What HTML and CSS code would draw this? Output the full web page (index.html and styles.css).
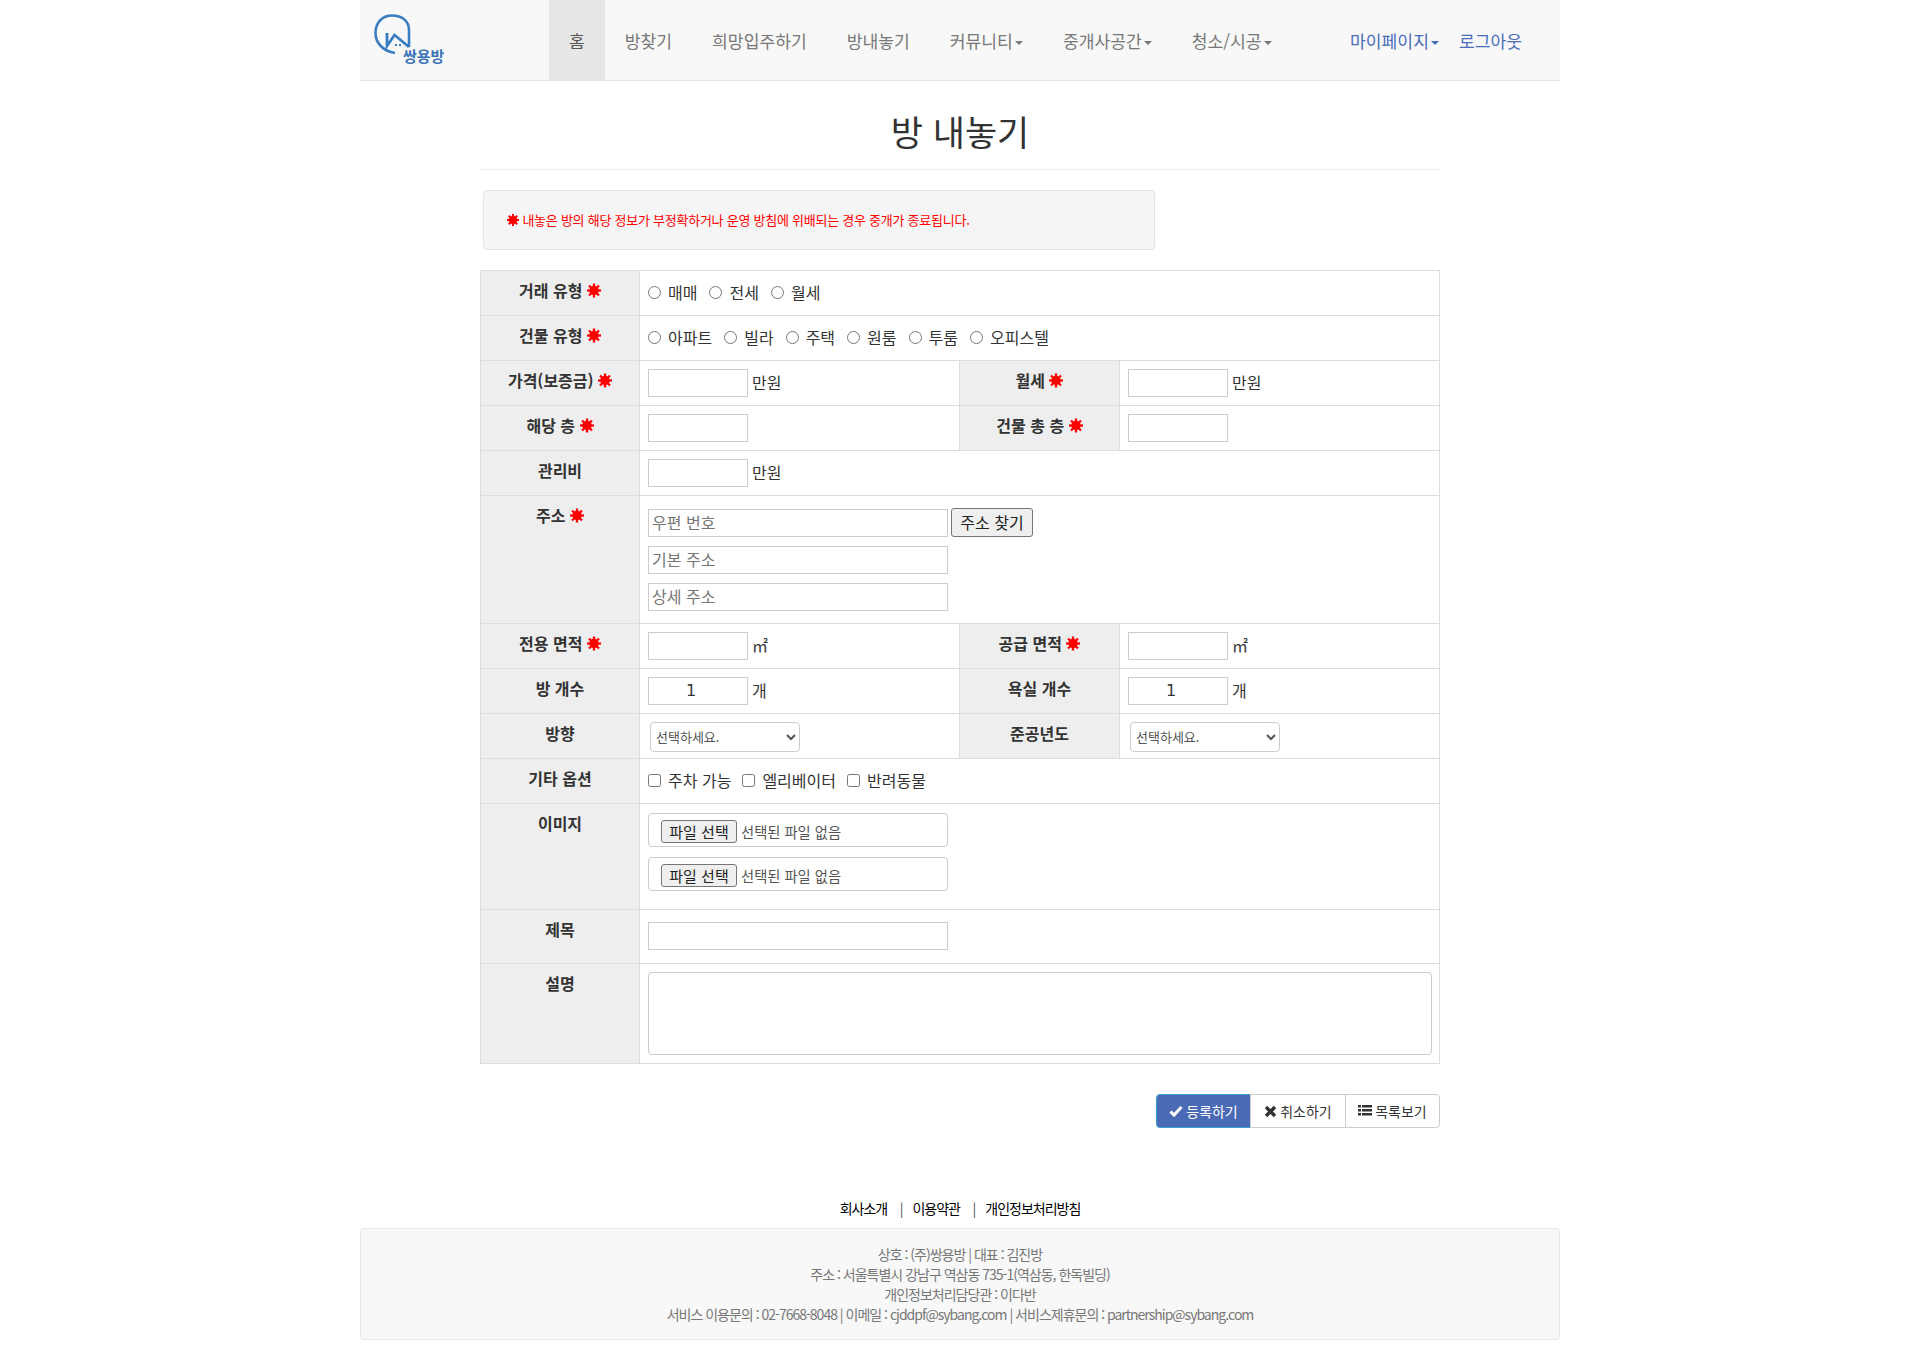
FILE: index.html
```html
<!DOCTYPE html>
<html lang="ko">
<head>
<meta charset="utf-8">
<title>방 내놓기</title>
<link rel="stylesheet" href="styles.css">
</head>
<body>
<svg class="defs" aria-hidden="true">
  <symbol id="star" viewBox="0 0 16 16">
    <circle cx="8" cy="8" r="5.400" fill="#f00"/>
    <g stroke="#f00" stroke-width="2.600">
      <line x1="8" y1="0" x2="8" y2="16"/>
      <line x1="0" y1="8" x2="16" y2="8"/>
      <line x1="2.300" y1="2.300" x2="13.700" y2="13.700"/>
      <line x1="13.700" y1="2.300" x2="2.300" y2="13.700"/>
    </g>
  </symbol>
</svg>
<div class="page">
  <nav class="navbar">
    <a class="brand" href="#">
      <svg class="logo" width="100" height="70" viewBox="0 0 100 70">
        <path d="M49 37V20C49 11 42 5.500 32 5.500C22 5.500 15.500 13 15.500 23C15.500 33 23 41 35 43" fill="none" stroke="#3a7dc0" stroke-width="2.600"/>
        <path d="M27 23V36L34.500 25L49 37" fill="none" stroke="#3a7dc0" stroke-width="2.800"/>
        <rect x="35" y="34" width="2" height="2" fill="#3a7dc0"/>
        <rect x="39" y="34" width="2" height="2" fill="#3a7dc0"/>
        <text x="43" y="52" class="logo-text">쌍용방</text>
      </svg>
    </a>
    <ul class="nav">
      <li class="nav-item active">홈</li>
      <li class="nav-item">방찾기</li>
      <li class="nav-item">희망입주하기</li>
      <li class="nav-item">방내놓기</li>
      <li class="nav-item">커뮤니티<i class="caret"></i></li>
      <li class="nav-item">중개사공간<i class="caret"></i></li>
      <li class="nav-item">청소/시공<i class="caret"></i></li>
    </ul>
    <ul class="nav nav-right">
      <li class="nav-item user">마이페이지<i class="caret"></i></li>
      <li class="nav-item user">로그아웃</li>
    </ul>
  </nav>

  <main class="content">
    <h2 class="title">방 내놓기</h2>
    <div class="well"><svg class="star star-sm"><use href="#star"/></svg> 내놓은 방의 해당 정보가 부정확하거나 운영 방침에 위배되는 경우 중개가 종료됩니다.</div>

    <table class="form-table">
      <colgroup><col class="c-label-a"><col class="c-field"><col class="c-label"><col class="c-field"></colgroup>
      <tr>
        <th>거래 유형 <svg class="star"><use href="#star"/></svg></th>
        <td colspan="3"><div class="opts">
          <label class="opt"><input type="radio" name="deal">매매</label>
          <label class="opt"><input type="radio" name="deal">전세</label>
          <label class="opt"><input type="radio" name="deal">월세</label>
        </div></td>
      </tr>
      <tr>
        <th>건물 유형 <svg class="star"><use href="#star"/></svg></th>
        <td colspan="3"><div class="opts">
          <label class="opt"><input type="radio" name="kind">아파트</label>
          <label class="opt"><input type="radio" name="kind">빌라</label>
          <label class="opt"><input type="radio" name="kind">주택</label>
          <label class="opt"><input type="radio" name="kind">원룸</label>
          <label class="opt"><input type="radio" name="kind">투룸</label>
          <label class="opt"><input type="radio" name="kind">오피스텔</label>
        </div></td>
      </tr>
      <tr>
        <th>가격(보증금) <svg class="star"><use href="#star"/></svg></th>
        <td><div class="field"><input class="input short" type="text"><span class="unit">만원</span></div></td>
        <th>월세 <svg class="star"><use href="#star"/></svg></th>
        <td><div class="field"><input class="input short" type="text"><span class="unit">만원</span></div></td>
      </tr>
      <tr>
        <th>해당 층 <svg class="star"><use href="#star"/></svg></th>
        <td><div class="field"><input class="input short" type="text"></div></td>
        <th>건물 총 층 <svg class="star"><use href="#star"/></svg></th>
        <td><div class="field"><input class="input short" type="text"></div></td>
      </tr>
      <tr>
        <th>관리비</th>
        <td colspan="3"><div class="field"><input class="input short" type="text"><span class="unit">만원</span></div></td>
      </tr>
      <tr>
        <th>주소 <svg class="star"><use href="#star"/></svg></th>
        <td colspan="3"><div class="addr">
          <div class="addr-row"><input class="input long" type="text" placeholder="우편 번호"><button class="find" type="button">주소 찾기</button></div>
          <div class="addr-row"><input class="input long" type="text" placeholder="기본 주소"></div>
          <div class="addr-row"><input class="input long" type="text" placeholder="상세 주소"></div>
        </div></td>
      </tr>
      <tr>
        <th>전용 면적 <svg class="star"><use href="#star"/></svg></th>
        <td><div class="field"><input class="input short" type="text"><span class="unit">㎡</span></div></td>
        <th>공급 면적 <svg class="star"><use href="#star"/></svg></th>
        <td><div class="field"><input class="input short" type="text"><span class="unit">㎡</span></div></td>
      </tr>
      <tr>
        <th>방 개수</th>
        <td><div class="field"><input class="input short num" type="number" value="1"><span class="unit">개</span></div></td>
        <th>욕실 개수</th>
        <td><div class="field"><input class="input short num" type="number" value="1"><span class="unit">개</span></div></td>
      </tr>
      <tr>
        <th>방향</th>
        <td class="select-cell"><select class="select"><option>선택하세요.</option></select></td>
        <th>준공년도</th>
        <td class="select-cell"><select class="select"><option>선택하세요.</option></select></td>
      </tr>
      <tr>
        <th>기타 옵션</th>
        <td colspan="3"><div class="opts opts-check">
          <label class="opt"><input type="checkbox">주차 가능</label>
          <label class="opt"><input type="checkbox">엘리베이터</label>
          <label class="opt"><input type="checkbox">반려동물</label>
        </div></td>
      </tr>
      <tr>
        <th>이미지</th>
        <td colspan="3">
          <div class="files">
            <div class="file"><button class="file-btn" type="button">파일 선택</button><span>선택된 파일 없음</span></div>
            <div class="file"><button class="file-btn" type="button">파일 선택</button><span>선택된 파일 없음</span></div>
          </div>
        </td>
      </tr>
      <tr>
        <th>제목</th>
        <td colspan="3"><input class="input long title-input" type="text"></td>
      </tr>
      <tr>
        <th>설명</th>
        <td colspan="3"><textarea class="textarea"></textarea></td>
      </tr>
    </table>

    <div class="actions">
      <div class="btn-group">
        <button class="btn primary" type="button">
          <svg width="14" height="14" viewBox="0 0 14 14"><path d="M1.500 7.500L5 11L12.500 3" fill="none" stroke="#fff" stroke-width="3"/></svg>등록하기
        </button>
        <button class="btn" type="button">
          <svg width="13" height="14" viewBox="0 0 13 14"><path d="M2 3L11 12M11 3L2 12" fill="none" stroke="#333" stroke-width="3.400"/></svg> 취소하기
        </button>
        <button class="btn" type="button">
          <svg width="14" height="14" viewBox="0 0 14 14"><path d="M0 1h3v2.500H0zM4 1h10v2.500H4zM0 5h3v2.500H0zM4 5h10v2.500H4zM0 9h3v2.500H0zM4 9h10v2.500H4z" fill="#333"/></svg> 목록보기
        </button>
      </div>
    </div>
  </main>

  <footer class="footer">
    <p class="foot-links"><a href="#">회사소개</a><span class="sep">|</span><a href="#">이용약관</a><span class="sep">|</span><a href="#">개인정보처리방침</a></p>
    <div class="foot-box">
      상호 : (주)쌍용방 | 대표 : 김진방<br>
      주소 : 서울특별시 강남구 역삼동 735-1(역삼동, 한독빌딩)<br>
      개인정보처리담당관 : 이다반<br>
      서비스 이용문의 : 02-7668-8048 | 이메일 : cjddpf@sybang.com | 서비스제휴문의 : partnership@sybang.com
    </div>
  </footer>
</div>
</body>
</html>
```
FILE: styles.css
```css
* { box-sizing: border-box; }
html, body { margin: 0; padding: 0; }
body {
  background: #fff;
  color: #333;
  font-family: "Noto Sans CJK KR", "Liberation Sans", sans-serif;
  font-size: 14px;
  line-height: 20px;
}
.defs { width: 0; height: 0; position: absolute; }
.page { width: 1200px; margin: 0 auto; padding-bottom: 21px; }

/* navbar */
.navbar {
  display: flex;
  height: 81px;
  background: #f8f8f8;
  border-bottom: 1px solid #e7e7e7;
}
.brand { display: block; width: 189px; height: 80px; }
.logo { display: block; margin-top: 10px; }
.logo-text { font-size: 15px; font-weight: 700; fill: #3a74b6; }
.nav { display: flex; list-style: none; margin: 0; padding: 0; }
.nav-right { margin-left: auto; margin-right: 18px; }
.nav-item {
  padding: 0 20px;
  height: 80px;
  line-height: 81px;
  font-size: 17.15px;
  color: #777;
  white-space: nowrap;
}
.nav-item.active { background: #e7e7e7; color: #555; }
.nav-item.user { color: #4a6cb8; }
.nav-right .nav-item:first-child { padding-right: 0; }
.caret {
  display: inline-block;
  width: 0;
  height: 0;
  margin-left: 2px;
  vertical-align: middle;
  border-top: 4px solid currentColor;
  border-left: 4px solid transparent;
  border-right: 4px solid transparent;
}

/* main */
.content { width: 960px; margin: 0 auto; }
.title {
  margin: 30px 0 0;
  padding-bottom: 18px;
  border-bottom: 1px solid #eee;
  font-size: 35px;
  line-height: 40px;
  font-weight: 400;
  text-align: center;
  color: #333;
}
.well {
  width: 672px;
  height: 60px;
  margin: 20px 0 20px 3px;
  padding: 19px 23px;
  background: #f5f5f5;
  border: 1px solid #e3e3e3;
  border-radius: 4px;
  color: #f00;
  font-size: 13px;
  line-height: 20px;
  letter-spacing: -0.25px;
  white-space: nowrap;
}
.star { width: 14px; height: 15px; vertical-align: -1px; }
.star-sm { width: 12px; height: 12px; }

/* table */
.form-table {
  width: 959px;
  table-layout: fixed;
  border-collapse: collapse;
  font-size: 16px;
}
.c-label-a { width: 159px; }
.c-label { width: 160px; }
.c-field { width: 320px; }
.form-table th, .form-table td {
  border: 1px solid #ddd;
  padding: 8px;
  vertical-align: top;
  line-height: 28px;
}
.form-table th {
  background: #eee;
  color: #333;
  font-weight: 700;
  text-align: center;
  line-height: 22px;
}
.form-table tr { height: 45px; }
.opts { display: flex; gap: 12px; height: 26px; align-items: center; }
.opts-check { gap: 11px; }
.opt { display: inline-flex; align-items: center; gap: 7px; color: #333; }
.opt input { width: 13px; height: 13px; margin: 0; }
.field { display: flex; align-items: center; gap: 4px; height: 28px; }
.unit { position: relative; top: -1px; }
.input {
  height: 28px;
  padding: 0 2px 2px 3px;
  border: 1px solid #ccc;
  border-radius: 0;
  background: #fff;
  font-family: inherit;
  font-size: 16px;
  color: #333;
  outline: none;
}
.input::placeholder { color: #757575; }
.short { width: 100px; }
.long { width: 300px; }
.num { font-family: "DejaVu Sans", sans-serif; text-align: center; }
.addr { display: flex; flex-direction: column; gap: 9px; padding: 4px 0; }
.addr-row { display: flex; align-items: center; gap: 3px; }
.find {
  width: 82px;
  height: 29px;
  padding: 0 0 1px;
  background: #efefef;
  border: 1px solid #767676;
  border-radius: 3px;
  font-family: inherit;
  font-size: 16px;
  color: #222;
}
.select-cell.select-cell { padding: 8px 8px 5px 10px; }
.select {
  display: block;
  width: 150px;
  height: 30px;
  padding: 0 0 2px 1px;
  background: #fff;
  border: 1px solid #ccc;
  border-radius: 4px;
  font-family: inherit;
  font-size: 13px;
  color: #555;
}
.files { padding-top: 1px; }
.file {
  display: flex;
  align-items: center;
  gap: 4px;
  width: 300px;
  height: 34px;
  margin-bottom: 10px;
  padding: 3px 12px 0;
  border: 1px solid #ccc;
  border-radius: 4px;
  font-size: 14.3px;
  line-height: 20px;
  color: #555;
}
.file-btn {
  width: 76px;
  height: 23px;
  padding: 0;
  background: #efefef;
  border: 1px solid #767676;
  border-radius: 3px;
  font-family: inherit;
  font-size: 15px;
  line-height: 20px;
  color: #222;
}
.title-input { display: block; margin: 4px 0 5px; }
.textarea {
  display: block;
  width: 784px;
  height: 83px;
  border: 1px solid #ccc;
  border-radius: 4px;
  background: #fff;
  outline: none;
  resize: none;
}

/* buttons */
.actions { display: flex; justify-content: flex-end; margin-top: 30px; }
.btn-group { display: flex; }
.btn {
  display: flex;
  align-items: center;
  justify-content: center;
  gap: 3px;
  width: 95px;
  height: 34px;
  margin-left: -1px;
  padding: 0;
  background: #fff;
  border: 1px solid #ccc;
  font-family: inherit;
  font-size: 14px;
  color: #333;
}
.btn:nth-child(2) { width: 96px; }
.btn:first-child { margin-left: 0; border-radius: 4px 0 0 4px; }
.btn:last-child { border-radius: 0 4px 4px 0; }
.btn.primary { background: #4a6ab5; border-color: #3a9fd0; color: #fff; }

/* footer */
.foot-links {
  margin: 70px 0 10px;
  text-align: center;
  font-size: 14px;
  line-height: 20px;
  letter-spacing: -1px;
}
.foot-links a { color: #000; font-weight: 400; text-decoration: none; }
.sep { margin: 0 10px 0 12.500px; color: #555; }
.foot-box {
  height: 112px;
  padding-top: 15px;
  background: #f8f8f8;
  border: 1px solid #e7e7e7;
  border-radius: 4px;
  text-align: center;
  font-size: 14px;
  line-height: 20px;
  letter-spacing: -1px;
  color: #777;
}
```
